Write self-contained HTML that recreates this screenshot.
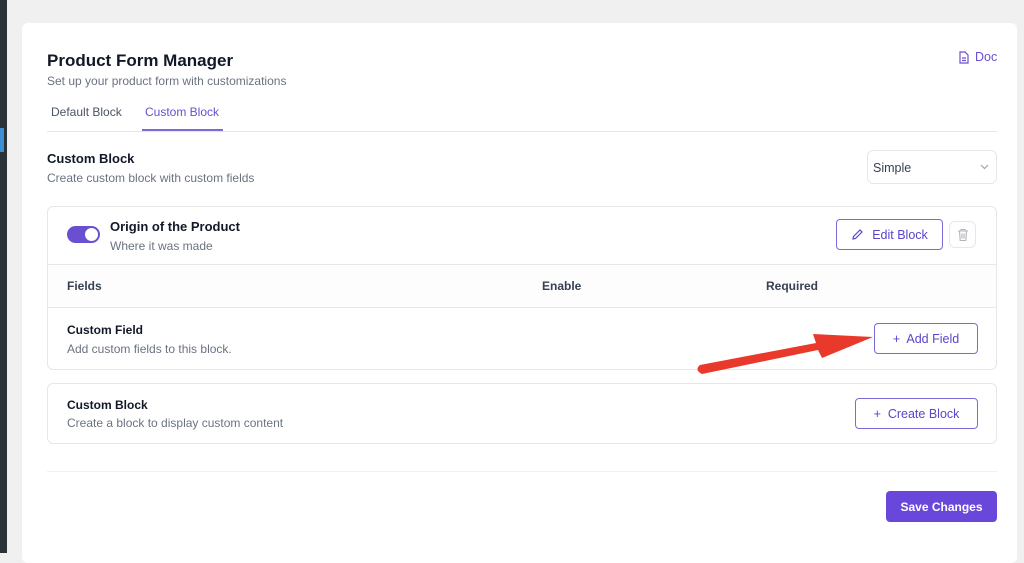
<!DOCTYPE html>
<html><head><meta charset="utf-8"><style>
*{box-sizing:border-box;margin:0;padding:0}
body{width:1024px;height:553px;overflow:hidden;background:#f0f0f1;font-family:"Liberation Sans",sans-serif;position:relative;color:#1d2327}
.a{position:absolute}
.strip{left:0;top:0;width:7px;height:553px;background:#2c3338}
.card{left:22px;top:23px;width:995px;height:540px;background:#fff;border-radius:6px}
.t{font-size:13px;color:#6b7280}
.h{font-weight:bold;color:#111827}
.box{border:1px solid #e5e7eb;border-radius:6px;background:#fff}
.btn{border:1px solid #7c6bd6;border-radius:4px;color:#5b45c9;font-size:12.5px;display:flex;align-items:center;justify-content:center;gap:8px;background:#fff}
.purple{color:#6a4fd1}
</style></head><body>
<div class="a strip"></div>
<div class="a" style="left:0;top:128px;width:4px;height:24px;background:#3d8fd1"></div>
<div class="a card"></div>
<div class="a h" style="left:47px;top:51px;font-size:17px">Product Form Manager</div>
<div class="a t" style="left:47px;top:74px;font-size:12px">Set up your product form with customizations</div>
<div class="a purple" style="left:958px;top:50px;font-size:12.5px;display:flex;align-items:center;gap:5px">
<svg width="12" height="13" viewBox="0 0 12 13" fill="none" stroke="#6a4fd1" stroke-width="1.2"><path d="M2 1h5l3 3v8H2z"/><path d="M4 7h4M4 9.5h4"/></svg>Doc</div>
<div class="a" style="left:51px;top:105px;font-size:12px;color:#4b5563">Default Block</div>
<div class="a purple" style="left:145px;top:105px;font-size:12px">Custom Block</div>
<div class="a" style="left:47px;top:131px;width:950px;height:1px;background:#e5e7eb"></div>
<div class="a" style="left:142px;top:129px;width:81px;height:2px;background:#7c6bd6"></div>
<div class="a h" style="left:47px;top:151px;font-size:13px">Custom Block</div>
<div class="a t" style="left:47px;top:171px;font-size:12px">Create custom block with custom fields</div>
<div class="a box" style="left:867px;top:150px;width:130px;height:34px;font-size:12.5px;color:#374151;padding:10px 0 0 5px">Simple
<svg class="a" style="left:112px;top:13px" width="9" height="6" viewBox="0 0 9 6" fill="none" stroke="#9ca3af" stroke-width="1.2"><path d="M1 1l3.5 3.5L8 1"/></svg></div>
<div class="a box" style="left:47px;top:206px;width:950px;height:164px"></div>
<div class="a" style="left:48px;top:264px;width:948px;height:44px;background:#fdfdfd;border-top:1px solid #e5e7eb;border-bottom:1px solid #e5e7eb"></div>
<div class="a" style="left:67px;top:226px;width:33px;height:17px;border-radius:9px;background:#6a4fd1"><div class="a" style="left:18px;top:2px;width:13px;height:13px;border-radius:50%;background:#fff"></div></div>
<div class="a h" style="left:110px;top:219px;font-size:13px">Origin of the Product</div>
<div class="a t" style="left:110px;top:239px;font-size:12px">Where it was made</div>
<div class="a btn" style="left:836px;top:219px;width:107px;height:31px"><svg width="13" height="13" viewBox="0 0 13 13" fill="none" stroke="#5b45c9" stroke-width="1.2"><path d="M2 11l.5-2.5L9 2l2 2-6.5 6.5z"/></svg>Edit Block</div>
<div class="a box" style="left:949px;top:221px;width:27px;height:27px"><svg class="a" style="left:7px;top:6px" width="12" height="14" viewBox="0 0 12 14" fill="none" stroke="#b0b4bb" stroke-width="1.1"><path d="M1 3h10M4 3V1.5h4V3M2.5 3l.7 9.5h5.6L9.5 3M5 5.5v5M7 5.5v5"/></svg></div>
<div class="a" style="left:67px;top:279px;font-size:12px;color:#374151;font-weight:bold">Fields</div>
<div class="a" style="left:542px;top:279px;font-size:12px;color:#374151;font-weight:bold">Enable</div>
<div class="a" style="left:766px;top:279px;font-size:12px;color:#374151;font-weight:bold">Required</div>
<div class="a h" style="left:67px;top:323px;font-size:12px">Custom Field</div>
<div class="a t" style="left:67px;top:342px;font-size:12px">Add custom fields to this block.</div>
<div class="a btn" style="left:874px;top:323px;width:104px;height:31px">+&nbsp; Add Field</div>
<svg class="a" style="left:690px;top:330px" width="190" height="50" viewBox="0 0 190 50"><path d="M12 44 L128 20 L132 28 L183 7 L123 4 L126 13 L10 35 Q4 40 12 44Z" fill="#e8392a"/></svg>
<div class="a box" style="left:47px;top:383px;width:950px;height:61px"></div>
<div class="a h" style="left:67px;top:398px;font-size:12px">Custom Block</div>
<div class="a t" style="left:67px;top:416px;font-size:12px">Create a block to display custom content</div>
<div class="a btn" style="left:855px;top:398px;width:123px;height:31px">+&nbsp; Create Block</div>
<div class="a" style="left:47px;top:471px;width:950px;height:1px;background:#f0f0f0"></div>
<div class="a" style="left:886px;top:491px;width:111px;height:31px;background:#6a47db;border-radius:4px;color:#fff;font-size:12px;font-weight:bold;display:flex;align-items:center;justify-content:center">Save Changes</div>
</body></html>
